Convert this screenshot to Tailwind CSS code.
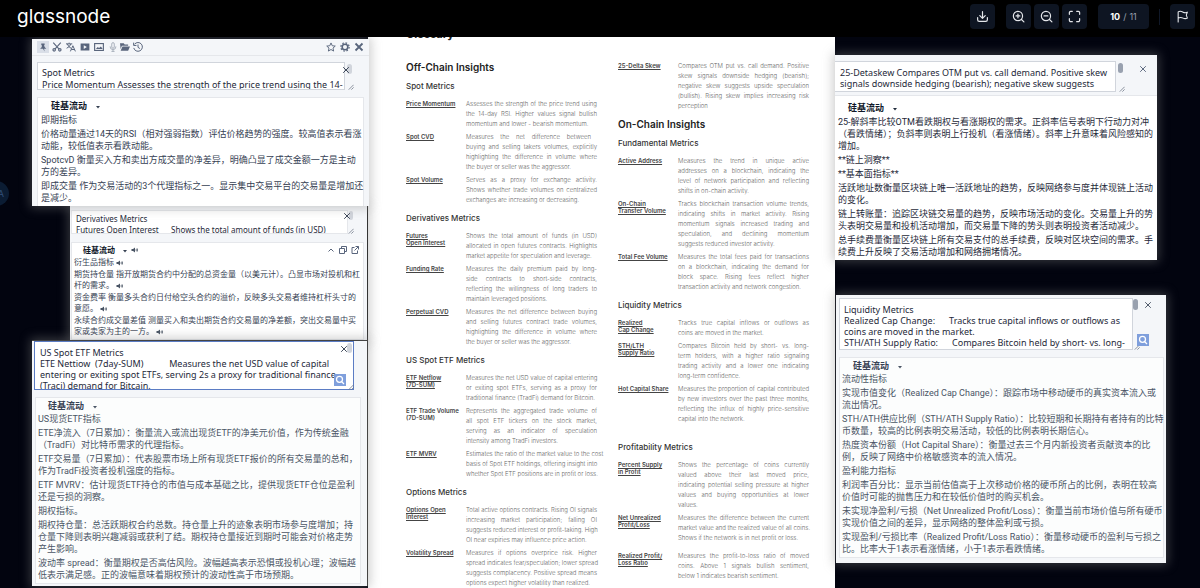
<!DOCTYPE html>
<html lang="en">
<head>
    <meta charset="UTF-8">
    <meta name="viewport" content="width=device-width, initial-scale=1.0">
    <title>glassnode</title>
    <script src="https://cdn.jsdelivr.net/npm/@tailwindcss/browser@4"></script>
</head>
<body class="flex h-screen flex-col overflow-hidden bg-[#02040f] font-['Inter','Noto_Sans_CJK_SC',sans-serif]">

    <!-- Shared icons -->
    <svg class="hidden">
        <symbol id="speaker" viewBox="0 0 16 12"><path d="M1 4h3l4-3v10L4 8H1z" fill="currentColor"/><path d="M10 4q1.500 2 0 4M12 2.500q2.500 3.500 0 7" fill="none" stroke="currentColor" stroke-width="1.600"/></symbol>
        <symbol id="close" viewBox="0 0 10 10"><path d="M1.500 1.500l7 7M8.500 1.500l-7 7" fill="none" stroke="currentColor" stroke-width="1.200"/></symbol>
        <symbol id="grip" viewBox="0 0 8 8"><path d="M1 7.500L7.500 1M4.500 7.500l3-3" fill="none" stroke="currentColor" stroke-width="1"/></symbol>
        <symbol id="caret" viewBox="0 0 8 8"><path d="M0 2h8L4 7z" fill="currentColor"/></symbol>
        <symbol id="search" viewBox="0 0 24 24"><circle cx="11" cy="10.500" r="6" fill="none" stroke="#fff" stroke-width="2.500"/><path d="M15 15l5 5" stroke="#fff" stroke-width="2.500"/></symbol>
    </svg>

    <!-- Top bar -->
    <header class="relative z-10 flex h-[37px] shrink-0 items-start justify-between bg-black pl-[17px] pr-[5px] pt-1">
        <a href="#" class="text-[19px] leading-[26px] text-white [font-feature-settings:'cv11','ss03']">glassnode</a>
        <div class="flex items-center">
            <button aria-label="Download" class="mr-[11px] flex size-[25px] items-center justify-center rounded-sm bg-[#0e1522] text-gray-200">
                <svg class="size-[13px]" viewBox="0 0 24 24" fill="none" stroke="currentColor" stroke-width="2.200" stroke-linecap="round" stroke-linejoin="round"><path d="M12 3v12M7 10.500l5 5 5-5M3 14v4a3 3 0 0 0 3 3h12a3 3 0 0 0 3-3v-4"/></svg>
            </button>
            <div class="flex gap-[3px]">
                <button aria-label="Zoom in" class="flex size-[25px] items-center justify-center rounded-sm bg-[#0e1522] text-gray-200">
                    <svg class="size-[13px]" viewBox="0 0 24 24" fill="none" stroke="currentColor" stroke-width="2.200" stroke-linecap="round"><circle cx="11" cy="11" r="8.500"/><path d="M17.500 17.500L22 22M11 7.500v7M7.500 11h7"/></svg>
                </button>
                <button aria-label="Zoom out" class="flex size-[25px] items-center justify-center rounded-sm bg-[#0e1522] text-gray-200">
                    <svg class="size-[13px]" viewBox="0 0 24 24" fill="none" stroke="currentColor" stroke-width="2.200" stroke-linecap="round"><circle cx="11" cy="11" r="8.500"/><path d="M17.500 17.500L22 22M7.500 11h7"/></svg>
                </button>
                <button aria-label="Full screen" class="flex size-[25px] items-center justify-center rounded-sm bg-[#0e1522] text-gray-200">
                    <svg class="size-[13px]" viewBox="0 0 24 24" fill="none" stroke="currentColor" stroke-width="2.200" stroke-linecap="round" stroke-linejoin="round"><path d="M2.500 8V5A2.500 2.500 0 0 1 5 2.500h3M16 2.500h3A2.500 2.500 0 0 1 21.500 5v3M21.500 16v3a2.500 2.500 0 0 1-2.500 2.500h-3M8 21.500H5A2.500 2.500 0 0 1 2.500 19v-3"/></svg>
                </button>
            </div>
            <div class="ml-[11px] flex h-[25px] w-[51px] items-center justify-center gap-[3px] rounded-sm bg-[#0e1522] text-[9px] text-gray-400"><span class="font-bold text-white">10</span><span>/</span><span>11</span></div>
            <div class="mx-[10px] h-4 w-px bg-gray-900"></div>
            <button aria-label="Report" class="flex size-[25px] items-center justify-center rounded-sm bg-[#0e1522] text-gray-200">
                <svg class="size-[13px]" viewBox="0 0 24 24" fill="none" stroke="currentColor" stroke-width="2" stroke-linecap="round" stroke-linejoin="round"><path d="M4 22V3.500C8 1 11 3 13 4s5 1.500 8 0L19 9.500l2 5.500c-3 1.500-6 1-8 0s-5-2-9 0"/></svg>
            </button>
        </div>
    </header>

    <main class="relative grid min-h-0 flex-1 grid-cols-[368fr_467fr_365fr]">

        <!-- Glossary page -->
        <article class="col-start-2 flex gap-[21px] overflow-hidden bg-white pl-[38px] pr-[26px] text-[6px] font-light leading-[10px] text-[#666]">
            <section class="min-w-0 flex-1">
                <h1 class="-mt-[10px] text-[11px] font-bold leading-[14px] text-[#222]">Glossary</h1>
                <h2 class="mt-[19px] text-[10px] font-semibold leading-[14px] text-[#222]">Off-Chain Insights</h2>

                <h3 class="mb-2 mt-[7px] text-[8px] font-medium leading-[10px] text-[#333]">Spot Metrics</h3>
                <dl class="grid grid-cols-[60px_minmax(0,1fr)] gap-y-[3px] whitespace-nowrap">
                    <dt class="pt-px font-semibold leading-[7px] text-[#444]"><a href="#" class="underline underline-offset-1">Price Momentum</a></dt>
                    <dd class="[text-align-last:justify]">Assesses the strength of the price trend using<br>the 14-day RSI. Higher values signal bullish<span class="block [text-align-last:left]">momentum and lower - bearish momentum.</span></dd>
                    <dt class="pt-px font-semibold leading-[7px] text-[#444]"><a href="#" class="underline underline-offset-1">Spot CVD</a></dt>
                    <dd class="[text-align-last:justify]"><span class="block pr-[6px]">Measures the net difference between</span>buying and selling takers volumes, explicitly<br>highlighting the difference in volume where<span class="block [text-align-last:left]">the buyer or seller was the aggressor.</span></dd>
                    <dt class="pt-px font-semibold leading-[7px] text-[#444]"><a href="#" class="underline underline-offset-1">Spot Volume</a></dt>
                    <dd class="[text-align-last:justify]">Serves as a proxy for exchange activity.<br>Shows whether trade volumes on centralized<span class="block [text-align-last:left]">exchanges are increasing or decreasing.</span></dd>
                </dl>

                <h3 class="my-2 text-[8px] font-medium leading-[10px] text-[#333]">Derivatives Metrics</h3>
                <dl class="grid grid-cols-[60px_minmax(0,1fr)] gap-y-[3px] whitespace-nowrap">
                    <dt class="pt-px font-semibold leading-[7px] text-[#444]"><a href="#" class="underline underline-offset-1">Futures<br>Open Interest</a></dt>
                    <dd class="[text-align-last:justify]">Shows the total amount of funds (in USD)<br>allocated in open futures contracts. Highlights<span class="block [text-align-last:left]">market appetite for speculation and leverage.</span></dd>
                    <dt class="pt-px font-semibold leading-[7px] text-[#444]"><a href="#" class="underline underline-offset-1">Funding Rate</a></dt>
                    <dd class="[text-align-last:justify]">Measures the daily premium paid by long-<br>side contracts to short-side contracts,<br>reflecting the willingness of long traders to<span class="block [text-align-last:left]">maintain leveraged positions.</span></dd>
                    <dt class="pt-px font-semibold leading-[7px] text-[#444]"><a href="#" class="underline underline-offset-1">Perpetual CVD</a></dt>
                    <dd class="[text-align-last:justify]">Measures the net difference between buying<br>and selling futures contract trade volumes,<br>highlighting the difference in volume where<span class="block [text-align-last:left]">the buyer or seller was the aggressor.</span></dd>
                </dl>

                <h3 class="my-2 text-[8px] font-medium leading-[10px] text-[#333]">US Spot ETF Metrics</h3>
                <dl class="grid grid-cols-[60px_minmax(0,1fr)] gap-y-[3px] whitespace-nowrap">
                    <dt class="pt-px font-semibold leading-[7px] text-[#444]"><a href="#" class="underline underline-offset-1">ETF Netflow<br>(7D-SUM)</a></dt>
                    <dd class="[text-align-last:justify]">Measures the net USD value of capital entering<br>or exiting spot ETFs, serving as a proxy for<span class="block [text-align-last:left]">traditional finance (TradFi) demand for Bitcoin.</span></dd>
                    <dt class="pt-px font-semibold leading-[7px] text-[#444]">ETF Trade Volume<br>(7D-SUM)</dt>
                    <dd class="[text-align-last:justify]">Represents the aggregated trade volume of<br>all spot ETF tickers on the stock market,<br>serving as an indicator of speculation<span class="block [text-align-last:left]">intensity among TradFi investors.</span></dd>
                    <dt class="pt-px font-semibold leading-[7px] text-[#444]"><a href="#" class="underline underline-offset-1">ETF MVRV</a></dt>
                    <dd class="[text-align-last:justify]">Estimates the ratio of the market value to the cost<br>basis of Spot ETF holdings, offering insight into<span class="block [text-align-last:left]">whether Spot ETF positions are in profit or loss.</span></dd>
                </dl>

                <h3 class="my-2 text-[8px] font-medium leading-[10px] text-[#333]">Options Metrics</h3>
                <dl class="grid grid-cols-[60px_minmax(0,1fr)] gap-y-[3px] whitespace-nowrap">
                    <dt class="pt-px font-semibold leading-[7px] text-[#444]"><a href="#" class="underline underline-offset-1">Options Open<br>Interest</a></dt>
                    <dd class="[text-align-last:justify]">Total active options contracts. Rising OI signals<br>increasing market participation; falling OI<br>suggests reduced interest or profit-taking. High<span class="block [text-align-last:left]">OI near expiries may influence price action.</span></dd>
                    <dt class="pt-px font-semibold leading-[7px] text-[#444]"><a href="#" class="underline underline-offset-1">Volatility Spread</a></dt>
                    <dd class="[text-align-last:justify]">Measures if options overprice risk. Higher<br>spread indicates fear/speculation; lower spread<br>suggests complacency. Positive spread means<span class="block [text-align-last:left]">options expect higher volatility than realized.</span></dd>
                </dl>
            </section>

            <section class="min-w-0 flex-1 pt-6">
                <dl class="grid grid-cols-[60px_minmax(0,1fr)] whitespace-nowrap">
                    <dt class="pt-px font-semibold leading-[7px] text-[#444]"><a href="#" class="underline underline-offset-1">25-Delta Skew</a></dt>
                    <dd class="[text-align-last:justify]">Compares OTM put vs. call demand. Positive<br>skew signals downside hedging (bearish);<br>negative skew suggests upside speculation<br>(bullish). Rising skew implies increasing risk<span class="block [text-align-last:left]">perception</span></dd>
                </dl>

                <h2 class="mt-[6px] text-[10px] font-semibold leading-[14px] text-[#222]">On-Chain Insights</h2>

                <h3 class="mb-2 mt-[7px] text-[8px] font-medium leading-[10px] text-[#333]">Fundamental Metrics</h3>
                <dl class="grid grid-cols-[60px_minmax(0,1fr)] gap-y-[3px] whitespace-nowrap">
                    <dt class="pt-px font-semibold leading-[7px] text-[#444]"><a href="#" class="underline underline-offset-1">Active Address</a></dt>
                    <dd class="[text-align-last:justify]">Measures the trend in unique active<br>addresses on a blockchain, indicating the<br>level of network participation and reflecting<span class="block [text-align-last:left]">shifts in on-chain activity.</span></dd>
                    <dt class="pt-px font-semibold leading-[7px] text-[#444]"><a href="#" class="underline underline-offset-1">On-Chain<br>Transfer Volume</a></dt>
                    <dd class="[text-align-last:justify]">Tracks blockchain transaction volume trends,<br>indicating shifts in market activity. Rising<br>momentum signals increased trading and<br>speculation, and declining momentum<span class="block [text-align-last:left]">suggests reduced investor activity.</span></dd>
                    <dt class="pt-px font-semibold leading-[7px] text-[#444]"><a href="#" class="underline underline-offset-1">Total Fee Volume</a></dt>
                    <dd class="[text-align-last:justify]">Measures the total fees paid for transactions<br>on a blockchain, indicating the demand for<br>block space. Rising fees reflect higher<span class="block [text-align-last:left]">transaction activity and network congestion.</span></dd>
                </dl>

                <h3 class="my-2 text-[8px] font-medium leading-[10px] text-[#333]">Liquidity Metrics</h3>
                <dl class="grid grid-cols-[60px_minmax(0,1fr)] gap-y-[3px] whitespace-nowrap">
                    <dt class="pt-px font-semibold leading-[7px] text-[#444]"><a href="#" class="underline underline-offset-1">Realized<br>Cap Change</a></dt>
                    <dd class="[text-align-last:justify]">Tracks true capital inflows or outflows as<span class="block [text-align-last:left]">coins are moved in the market.</span></dd>
                    <dt class="pt-px font-semibold leading-[7px] text-[#444]"><a href="#" class="underline underline-offset-1">STH/LTH<br>Supply Ratio</a></dt>
                    <dd class="[text-align-last:justify]">Compares Bitcoin held by short- vs. long-<br>term holders, with a higher ratio signaling<br>trading activity and a lower one indicating<span class="block [text-align-last:left]">long-term confidence.</span></dd>
                    <dt class="pt-px font-semibold leading-[7px] text-[#444]"><a href="#" class="underline underline-offset-1">Hot Capital Share</a></dt>
                    <dd class="[text-align-last:justify]">Measures the proportion of capital contributed<br>by new investors over the past three months,<br>reflecting the influx of highly price-sensitive<span class="block [text-align-last:left]">capital into the network.</span></dd>
                </dl>

                <h3 class="mb-2 mt-[18px] text-[8px] font-medium leading-[10px] text-[#333]">Profitability Metrics</h3>
                <dl class="grid grid-cols-[60px_minmax(0,1fr)] gap-y-[3px] whitespace-nowrap">
                    <dt class="pt-px font-semibold leading-[7px] text-[#444]"><a href="#" class="underline underline-offset-1">Percent Supply<br>in Profit</a></dt>
                    <dd class="[text-align-last:justify]">Shows the percentage of coins currently<br>valued above their last moved price,<br>indicating potential selling pressure at higher<br>values and buying opportunities at lower<span class="block [text-align-last:left]">values.</span></dd>
                    <dt class="pt-px font-semibold leading-[7px] text-[#444]"><a href="#" class="underline underline-offset-1">Net Unrealized<br>Profit/Loss</a></dt>
                    <dd class="pb-[5px] [text-align-last:justify]">Measures the difference between the current<br>market value and the realized value of all coins.<span class="block [text-align-last:left]">Shows if the network is in net profit or loss.</span></dd>
                    <dt class="pt-px font-semibold leading-[7px] text-[#444]"><a href="#" class="underline underline-offset-1">Realized Profit/<br>Loss Ratio</a></dt>
                    <dd class="[text-align-last:justify]">Measures the profit-to-loss ratio of moved<br>coins. Above 1 signals bullish sentiment,<span class="block [text-align-last:left]">below 1 indicates bearish sentiment.</span></dd>
                </dl>
            </section>
        </article>

        <!-- Floating translate bubble -->
        <button aria-label="Translate" class="absolute -left-4 top-[144px] flex size-[25px] items-center justify-end rounded-full bg-[#0b1c33] pr-[5px] text-[9px] text-[#33507a]">A</button>

        <!-- Window: derivatives -->
        <section class="absolute left-[70px] top-[169px] w-[298px] border-r border-[#333] bg-[#f4f6f9] pb-px pl-px pr-[3px] pt-1 font-['Roboto','Noto_Sans_CJK_SC',sans-serif] shadow-[0_0_10px_2px_rgba(130,130,130,0.4)]">
            <div class="relative mr-[10px] h-6">
                <textarea readonly aria-label="Derivatives source text" wrap="off" class="block h-6 w-[277px] resize-none overflow-hidden border border-gray-200 bg-white pl-1 pt-[2px] font-['Noto_Sans',sans-serif] text-[8px] leading-[11px] text-gray-800">Derivatives Metrics
Futures Open Interest      Shows the total amount of funds (in USD)</textarea>
                <span class="absolute right-px top-px h-[9px] w-1 rounded-full bg-gray-300"></span>
                <svg class="absolute right-[3px] top-[2px] size-2 text-gray-700"><use href="#close"/></svg>
                <svg class="absolute bottom-0 right-0 size-[6px] text-gray-500"><use href="#grip"/></svg>
            </div>
            <div class="mt-2 border border-gray-200 bg-white pb-[2px] pl-[2px] text-[8px] leading-[11px] text-gray-700">
                <div class="flex h-[14px] items-center pl-[9px] pr-1">
                    <b class="text-gray-900">硅基流动</b>
                    <svg class="ml-2 mt-[2px] size-[4px]"><use href="#caret"/></svg>
                    <svg class="ml-1 h-[6px] w-2 text-gray-600"><use href="#speaker"/></svg>
                    <div class="ml-auto flex items-center gap-1 text-[#59657c]">
                        <svg class="size-2" viewBox="0 0 16 16" fill="none" stroke="currentColor" stroke-width="2"><path d="M3 11l5-5 5 5"/></svg>
                        <svg class="size-2" viewBox="0 0 16 16" fill="none" stroke="currentColor" stroke-width="2"><path d="M1 5h10v10H1zM5 5V1h10v10h-4"/></svg>
                        <svg class="size-2" viewBox="0 0 16 16" fill="none" stroke="currentColor" stroke-width="2"><path d="M7 3H2v12h11V9M9 1h6v6M15 1L7 9"/></svg>
                    </div>
                </div>
                <div class="flex flex-col gap-px whitespace-nowrap">
                    <p>衍生品指标 <svg class="inline h-[6px] w-2 text-gray-600"><use href="#speaker"/></svg></p>
                    <p>期货持仓量 指开放期货合约中分配的总资金量（以美元计）。凸显市场对投机和杠<br>杆的需求。 <svg class="inline h-[6px] w-2 text-gray-600"><use href="#speaker"/></svg></p>
                    <p>资金费率 衡量多头合约日付给空头合约的溢价，反映多头交易者维持杠杆头寸的<br>意愿。 <svg class="inline h-[6px] w-2 text-gray-600"><use href="#speaker"/></svg></p>
                    <p>永续合约成交量差值 测量买入和卖出期货合约交易量的净差额，突出交易量中买<br>家或卖家为主的一方。 <svg class="inline h-[6px] w-2 text-gray-600"><use href="#speaker"/></svg></p>
                </div>
            </div>
        </section>

        <!-- Window: spot metrics -->
        <section class="absolute left-8 top-[2px] w-[337px] bg-[#f4f6f9] font-['Roboto','Noto_Sans_CJK_SC',sans-serif] shadow-[0_0_10px_2px_rgba(130,130,130,0.4)]">
            <div class="flex h-[17px] items-center border-b border-gray-200 px-[5px] text-[#59657c]">
                <div class="flex items-center gap-[3px]">
                    <button aria-label="Pin" class="flex h-3 w-3 items-center justify-center bg-[#d9dee7]"><svg class="size-[9px]" viewBox="0 0 16 16"><path d="M4 1h6v2L9 4l1 3 3 3H9l1 5-3-5H2l3-3V4L4 3z" fill="currentColor"/></svg></button>
                    <button aria-label="Screenshot" class="size-[11px]"><svg class="size-[10px]" viewBox="0 0 16 16" fill="none" stroke="currentColor" stroke-width="1.800"><path d="M2 1l9 10M14 1L5 11"/><circle cx="3.500" cy="12.500" r="2"/><circle cx="12.500" cy="12.500" r="2"/></svg></button>
                    <button aria-label="Translate text" class="size-[11px]"><svg class="size-[10px]" viewBox="0 0 16 16" fill="none" stroke="currentColor" stroke-width="1.600"><path d="M0 3h10M5 1v2M2 3q2 5 6 7M8 3Q6 8 1 10M7 15l4-9 4 9M8.500 12h5"/></svg></button>
                    <button aria-label="Record" class="size-[11px]"><svg class="size-[10px]" viewBox="0 0 16 16"><path fill-rule="evenodd" d="M1 2.500h14v11H1zM6 5v6l5-3z" fill="currentColor"/></svg></button>
                    <button aria-label="Image" class="size-[11px]"><svg class="size-[10px]" viewBox="0 0 16 16" fill="none" stroke="currentColor" stroke-width="1.800"><rect x="1" y="2.500" width="14" height="11"/><path d="M3 11l3-3 2 1.500L11 7l3 4z" fill="currentColor" stroke="none"/></svg></button>
                    <button aria-label="Microphone" class="w-[9px] text-gray-400"><svg class="size-[10px]" viewBox="0 0 16 16" fill="none" stroke="currentColor" stroke-width="1.300"><rect x="6" y="1" width="4" height="9" rx="2"/><path d="M3.500 7v1q0 4 4.500 4t4.500-4V7M8 12v3M5.500 15h5"/></svg></button>
                    <button aria-label="Open file" class="w-[10px]"><svg class="size-[10px]" viewBox="0 0 16 16" fill="currentColor"><path d="M0 2h6l1.500 2H13v2H3L1 11zM4 7h12l-3 7H1z"/></svg></button>
                    <button aria-label="History" class="size-[11px]"><svg class="size-[10px]" viewBox="0 0 16 16" fill="none" stroke="currentColor" stroke-width="1.600"><path d="M2.500 3.500A7 7 0 1 1 1.200 9.500M1 1v4.500h4.500M8 4v4.500l3 2"/></svg></button>
                </div>
                <div class="ml-auto flex items-center gap-1">
                    <button aria-label="Favourite" class="size-[10px]"><svg class="size-[10px]" viewBox="0 0 16 16" fill="none" stroke="currentColor" stroke-width="1.500"><path d="M8 1.500l2 4.500 4.800.5-3.600 3.200 1 4.800L8 12l-4.200 2.500 1-4.800L1.200 6.500 6 6z"/></svg></button>
                    <button aria-label="Settings" class="size-[10px]"><svg class="size-[10px]" viewBox="0 0 16 16" fill="none" stroke="currentColor"><circle cx="8" cy="8" r="4.500" stroke-width="2.500"/><circle cx="8" cy="8" r="6.600" stroke-width="2" stroke-dasharray="2.600 2.584"/></svg></button>
                    <button aria-label="Close" class="size-[10px]"><svg class="size-[10px]" viewBox="0 0 10 10"><path d="M1.500 1.500l7 7M8.500 1.500l-7 7" stroke="currentColor" stroke-width="1.800"/></svg></button>
                </div>
            </div>
            <div class="pl-[5px] pr-[5px] pt-[6px]">
                <div class="relative mr-[10px] h-7">
                    <textarea readonly aria-label="Spot source text" wrap="off" class="block h-7 w-[308px] resize-none overflow-hidden border border-gray-300 bg-white pl-1 pt-[4px] font-['Noto_Sans',sans-serif] text-[9px] leading-3 text-gray-800">Spot Metrics
Price Momentum Assesses the strength of the price trend using the 14-</textarea>
                    <span class="absolute right-[2px] top-[2px] h-[10px] w-[5px] rounded-full bg-gray-300"></span>
                    <svg class="absolute right-1 top-1 size-2 text-gray-700"><use href="#close"/></svg>
                    <svg class="absolute bottom-0 right-0 size-[6px] text-gray-500"><use href="#grip"/></svg>
                </div>
                <div class="mt-[7px] border border-b-0 border-gray-200 bg-white pb-[2px] pl-[3px] text-[9px] leading-3 text-gray-700">
                    <div class="flex h-4 items-center pl-[10px]">
                        <b class="text-gray-900">硅基流动</b>
                        <svg class="ml-[9px] mt-[2px] size-[4px]"><use href="#caret"/></svg>
                    </div>
                    <div class="flex flex-col gap-[2px] whitespace-nowrap">
                        <p>即期指标</p>
                        <p>价格动量通过14天的RSI（相对强弱指数）评估价格趋势的强度。较高值表示看涨<br>动能，较低值表示看跌动能。</p>
                        <p>SpotcvD 衡量买入方和卖出方成交量的净差异，明确凸显了成交金额一方是主动<br>方的差异。</p>
                        <p>即成交量 作为交易活动的3个代理指标之一。显示集中交易平台的交易量是增加还<br>是减少。</p>
                    </div>
                </div>
            </div>
        </section>

        <!-- Window: US spot ETF -->
        <section class="absolute left-8 top-[303px] w-[336px] border-r border-t border-[#444] bg-[#f4f6f9] pb-[2px] pl-[2px] pr-[6px] font-['Roboto','Noto_Sans_CJK_SC',sans-serif] shadow-[0_0_10px_2px_rgba(130,130,130,0.4)]">
            <div class="relative mr-[7px] h-[49px]">
                <textarea readonly aria-label="ETF source text" wrap="off" class="block h-[49px] w-full resize-none overflow-hidden border border-[#5b7cc4] bg-white pl-[5px] pt-[5px] font-['Noto_Sans',sans-serif] text-[9px] leading-[11px] text-gray-800">US Spot ETF Metrics
ETE Nettiow  (7day-SUM)           Measures the net USD value of capital
entering or exiting spot ETFs, serving 2s a proxy for traditional finance
(Traci) demand for Bitcain.</textarea>
                <span class="absolute right-[2px] top-[2px] h-[10px] w-[5px] rounded-full bg-gray-300"></span>
                <svg class="absolute right-[6px] top-1 size-2 text-gray-700"><use href="#close"/></svg>
                <button aria-label="Search" class="absolute bottom-1 right-2 size-3 bg-[#7f9fdc]"><svg class="size-3"><use href="#search"/></svg></button>
                <svg class="absolute bottom-0 right-0 size-[6px] text-gray-500"><use href="#grip"/></svg>
            </div>
            <div class="ml-px mt-[7px] border border-gray-200 bg-[#fcfdfd] pb-[2px] pl-[2px] text-[9px] leading-3 text-gray-600">
                <div class="flex h-[15px] items-center pl-[10px]">
                    <b class="text-gray-700">硅基流动</b>
                    <svg class="ml-[9px] mt-[2px] size-[4px]"><use href="#caret"/></svg>
                </div>
                <div class="flex flex-col gap-[2px] whitespace-nowrap">
                    <p>US现货ETF指标</p>
                    <p>ETE净流入（7日累加）：衡量流入或流出现货ETF的净美元价值，作为传统金融<br>（TradFi）对比特币需求的代理指标。</p>
                    <p>ETF交易量（7日累加）：代表股票市场上所有现货ETF报价的所有交易量的总和，<br>作为TradFi投资者投机强度的指标。</p>
                    <p>ETF MVRV：估计现货ETF持仓的市值与成本基础之比，提供现货ETF仓位是盈利<br>还是亏损的洞察。</p>
                    <p>期权指标。</p>
                    <p>期权持仓量：总活跃期权合约总数。持仓量上升的迹象表明市场参与度增加；持<br>仓量下降则表明兴趣减弱或获利了结。期权持仓量接近到期时可能会对价格走势<br>产生影响。</p>
                    <p>波动率 spread：衡量期权是否高估风险。波幅越高表示恐惧或投机心理；波幅越<br>低表示满足感。正的波幅意味着期权预计的波动性高于市场预期。</p>
                </div>
            </div>
        </section>

        <!-- Window: 25-delta skew -->
        <section class="absolute left-[835px] top-[18px] w-[322px] bg-[#f4f6f9] font-['Roboto','Noto_Sans_CJK_SC',sans-serif] shadow-[0_0_10px_2px_rgba(130,130,130,0.4)]">
            <div class="flex items-start gap-[14px] border-b border-gray-200 pb-[3px] pr-[10px] pt-[6px]">
                <div class="relative h-[31px] flex-1">
                    <textarea readonly aria-label="Skew source text" wrap="off" class="block h-[31px] w-[281px] resize-none overflow-hidden border border-l-0 border-gray-300 bg-white pl-[5px] pt-[5px] font-['Noto_Sans',sans-serif] text-[9px] leading-[11px] text-gray-800">25-Detaskew Compares OTM put vs. call demand. Positive skew
signals downside hedging (bearish); negative skew suggests
upside speculation (bullish). Rising skew implies increasing risk</textarea>
                    <span class="absolute right-[2px] top-[2px] h-[10px] w-[5px] rounded-full bg-gray-400"></span>
                    <svg class="absolute bottom-0 right-0 size-[6px] text-gray-500"><use href="#grip"/></svg>
                </div>
                <button aria-label="Close" class="mt-1 size-2 text-[#59657c]"><svg class="size-2"><use href="#close"/></svg></button>
            </div>
            <div class="bg-white pb-[2px] pl-[3px] text-[9px] leading-3 text-gray-800">
                <div class="flex h-5 items-center pl-[10px] pt-[3px]">
                    <b class="text-gray-900">硅基流动</b>
                    <svg class="ml-[9px] mt-[2px] size-[4px]"><use href="#caret"/></svg>
                </div>
                <div class="flex flex-col gap-[2px] whitespace-nowrap">
                    <p>25-解斜率比较OTM看跌期权与看涨期权的需求。正斜率信号表明下行动力对冲<br>（看跌情绪）；负斜率则表明上行投机（看涨情绪）。斜率上升意味着风险感知的<br>增加。</p>
                    <p>**链上洞察**</p>
                    <p>**基本面指标**</p>
                    <p>活跃地址数衡量区块链上唯一活跃地址的趋势，反映网络参与度并体现链上活动<br>的变化。</p>
                    <p>链上转账量：追踪区块链交易量的趋势，反映市场活动的变化。交易量上升的势<br>头表明交易量和投机活动增加，而交易量下降的势头则表明投资者活动减少。</p>
                    <p>总手续费量衡量区块链上所有交易支付的总手续费，反映对区块空间的需求。手<br>续费上升反映了交易活动增加和网络拥堵情况。</p>
                </div>
            </div>
        </section>

        <!-- Window: liquidity -->
        <section class="absolute left-[836px] top-[258px] w-[330px] bg-[#f4f6f9] pb-[5px] pl-[3px] pr-[2px] pt-[3px] font-['Roboto','Noto_Sans_CJK_SC',sans-serif] shadow-[0_0_10px_2px_rgba(130,130,130,0.4)]">
            <div class="flex items-start gap-1 pr-3">
                <div class="relative h-[52px] flex-1">
                    <textarea readonly aria-label="Liquidity source text" wrap="off" class="block h-[52px] w-[294px] resize-none overflow-hidden border border-gray-300 bg-white pl-1 pt-[5px] font-['Noto_Sans',sans-serif] text-[9px] leading-[11px] text-gray-800">Liquidity Metrics
Realized Cap Change:      Tracks true capital inflows or outflows as
coins are moved in the market.
STH/ATH Supply Ratio:      Compares Bitcoin held by short- vs. long-</textarea>
                    <span class="absolute right-[2px] top-px h-[11px] w-[5px] rounded-full bg-gray-400"></span>
                    <svg class="absolute bottom-0 right-0 size-[6px] text-gray-500"><use href="#grip"/></svg>
                    <button aria-label="Search" class="absolute -right-[9px] bottom-1 size-3 bg-[#7f9fdc]"><svg class="size-3"><use href="#search"/></svg></button>
                </div>
                <button aria-label="Close" class="mt-[3px] size-2 text-gray-600"><svg class="size-2"><use href="#close"/></svg></button>
            </div>
            <div class="mt-[7px] border border-gray-200 bg-[#fcfdfd] pb-[2px] pl-[2px] text-[9px] leading-3 text-gray-600">
                <div class="flex h-[15px] items-center pl-[11px] pt-px">
                    <b class="text-gray-700">硅基流动</b>
                    <svg class="ml-[9px] mt-[2px] size-[4px]"><use href="#caret"/></svg>
                </div>
                <div class="flex flex-col gap-[2px] whitespace-nowrap">
                    <p>流动性指标</p>
                    <p>实现市值变化（Realized Cap Change）：跟踪市场中移动硬币的真实资本流入或<br>流出情况。</p>
                    <p>STH/ATH供应比例（STH/ATH Supply Ratio）：比较短期和长期持有者持有的比特<br>币数量，较高的比例表明交易活动，较低的比例表明长期信心。</p>
                    <p>热度资本份额（Hot Capital Share）：衡量过去三个月内新投资者贡献资本的比<br>例，反映了网络中价格敏感资本的流入情况。</p>
                    <p>盈利能力指标</p>
                    <p>利润率百分比：显示当前估值高于上次移动价格的硬币所占的比例，表明在较高<br>价值时可能的抛售压力和在较低价值时的购买机会。</p>
                    <p>未实现净盈利/亏损（Net Unrealized Profit/Loss）：衡量当前市场价值与所有硬币<br>实现价值之间的差异，显示网络的整体盈利或亏损。</p>
                    <p>实现盈利/亏损比率（Realized Profit/Loss Ratio）：衡量移动硬币的盈利与亏损之<br>比。比率大于1表示看涨情绪，小于1表示看跌情绪。</p>
                </div>
            </div>
        </section>
    </main>
</body>
</html>
